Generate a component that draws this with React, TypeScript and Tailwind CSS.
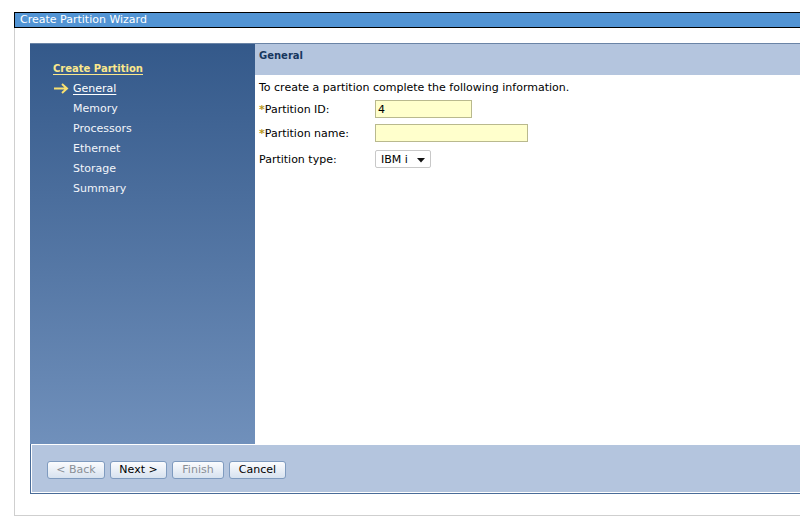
import React from 'react';

const navItems = ['Memory', 'Processors', 'Ethernet', 'Storage', 'Summary'];

function WizardButton({ label, width, disabled }: { label: string; width: string; disabled?: boolean }) {
  return (
    <button
      disabled={disabled}
      className={`h-[18px] rounded-[3px] border border-[#7f9bbf] bg-gradient-to-b from-[#fbfcfe] to-[#d7e2ef] text-[11px] leading-[16px] ${width} ${
        disabled ? 'text-[#8a8f96]' : 'text-black'
      }`}
    >
      {label}
    </button>
  );
}

export default function App() {
  return (
    <div
      className="relative h-[519px] w-[800px] overflow-hidden bg-white pl-[14px] pt-[12px] text-[11px]"
      style={{ fontFamily: '"DejaVu Sans", Verdana, sans-serif' }}
    >
      <div className="h-[504px] w-[800px] border-b border-l border-[#cfcfcf]">
        {/* Title bar */}
        <div className="-ml-px h-[16px] border border-black bg-[#5294d4] pl-[5px] text-[11px] leading-[14px] text-white">
          Create Partition Wizard
        </div>

        <div className="pl-[15px] pt-[15px]">
          <div className="w-[780px]">
            {/* Top row: nav + content */}
            <div className="flex h-[401px] border-t border-[#6a84a6]">
              {/* Left nav */}
              <div className="w-[225px] bg-gradient-to-b from-[#34598a] to-[#7090bb] pl-[23px] pt-[18px]">
                <div className="text-[10px] font-bold leading-[13px] text-[#fbe88c] underline underline-offset-[2px]">
                  Create Partition
                </div>
                <div className="mt-[7px] flex h-[13px] items-center">
                  <svg width="16" height="11" viewBox="0 0 16 11" className="mr-[4px]">
                    <path d="M1 5.5 H14 M9 1 L14 5.5 L9 10" stroke="#f8e070" strokeWidth="2" fill="none" />
                  </svg>
                  <span className="leading-[13px] text-white underline underline-offset-[2px]">General</span>
                </div>
                {navItems.map(item => (
                  <div key={item} className="mt-[7px] pl-[20px] leading-[13px] text-[#f2f5fa]">
                    {item}
                  </div>
                ))}
              </div>

              {/* Right content */}
              <div className="flex-1 bg-white">
                <div className="h-[31px] bg-[#b4c5de] pl-[4px] pt-[5px] text-[10px] font-bold leading-[13px] text-[#17375e]">
                  General
                </div>
                <div className="pl-[4px] pt-[6px] text-black">
                  <p className="leading-[13px]">To create a partition complete the following information.</p>
                  <div className="mt-[6px] flex items-center">
                    <span className="w-[116px] leading-[13px]">
                      <span className="font-bold text-[#b8961a]">*</span>Partition ID:
                    </span>
                    <div className="h-[18px] w-[97px] border border-[#b9b98e] bg-[#ffffcc] pl-[2px] pt-[2px] leading-[13px]">
                      4
                    </div>
                  </div>
                  <div className="mt-[6px] flex items-center">
                    <span className="w-[116px] leading-[13px]">
                      <span className="font-bold text-[#b8961a]">*</span>Partition name:
                    </span>
                    <div className="h-[18px] w-[153px] border border-[#b9b98e] bg-[#ffffcc]" />
                  </div>
                  <div className="mt-[8px] flex items-center">
                    <span className="w-[116px] leading-[13px]">Partition type:</span>
                    <div className="flex h-[18px] w-[56px] items-center rounded-[2px] border border-[#c8c8c8] bg-white pl-[5px]">
                      <span className="leading-[13px]">IBM i</span>
                      <svg width="8" height="5" viewBox="0 0 8 5" className="ml-[9px] mt-[2px]">
                        <path d="M0 0 H8 L4 4.5 Z" fill="#111" />
                      </svg>
                    </div>
                  </div>
                </div>
              </div>
            </div>

            {/* Button bar */}
            <div className="border-b border-l border-[#4a6c98]">
              <div className="flex h-[49px] gap-[5px] border border-white bg-[#b4c5de] pl-[15px] pt-[16px]">
                <WizardButton label="< Back" width="w-[58px]" disabled />
                <WizardButton label="Next >" width="w-[57px]" />
                <WizardButton label="Finish" width="w-[52px]" disabled />
                <WizardButton label="Cancel" width="w-[57px]" />
              </div>
            </div>
          </div>
        </div>
      </div>
    </div>
  );
}
